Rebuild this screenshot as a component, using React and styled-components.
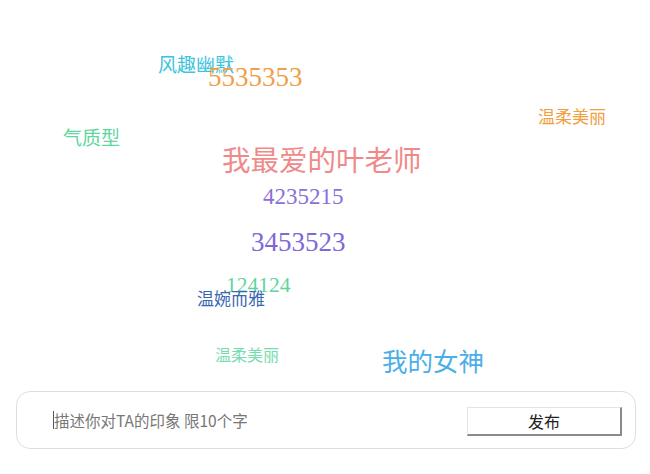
import styled, { createGlobalStyle } from "styled-components";

const GlobalStyle = createGlobalStyle`
  body {
    margin: 0;
    background: #fff;
    font-family: "Noto Sans CJK SC", "Noto Sans", sans-serif;
  }
`;

const words = [
  { text: "风趣幽默", x: 158, y: 54, size: 19, color: "#3cc4dc" },
  { text: "5535353", x: 208, y: 64, size: 27, color: "#f0a048", num: true },
  { text: "温柔美丽", x: 538, y: 107, size: 17, color: "#f0a040" },
  { text: "气质型", x: 63, y: 127, size: 19, color: "#5ed6a0" },
  { text: "我最爱的叶老师", x: 222, y: 145, size: 28.5, color: "#f08a8a" },
  { text: "4235215", x: 263, y: 185, size: 23, color: "#8a70d8", num: true },
  { text: "3453523", x: 251, y: 229, size: 27, color: "#8068d8", num: true },
  { text: "124124", x: 226, y: 275, size: 21.5, color: "#60d4a0", num: true },
  { text: "温婉而雅", x: 197, y: 289, size: 17, color: "#3a68b0" },
  { text: "温柔美丽", x: 215, y: 346, size: 16, color: "#78dcb0" },
  { text: "我的女神", x: 382, y: 347, size: 25.5, color: "#4aaee8" },
];

const Page = styled.div`
  width: 650px;
  height: 474px;
  display: flex;
  flex-direction: column;
`;

const Cloud = styled.div`
  position: relative;
  height: 391px;
  flex-shrink: 0;
`;

const Word = styled.span`
  position: absolute;
  white-space: nowrap;
  line-height: 1;
  font-size: ${(p) => p.$size}px;
  color: ${(p) => p.$color};
  font-family: ${(p) =>
    p.$num
      ? `"Liberation Serif", serif`
      : `"Noto Sans CJK SC", "Noto Sans", sans-serif`};
`;

const Composer = styled.form`
  margin: 0 14px 0 16px;
  height: 58px;
  box-sizing: border-box;
  border: 1px solid #dedede;
  border-radius: 14px;
  display: flex;
  align-items: center;
  padding: 0 13px 0 36px;
  gap: 12px;
`;

const Field = styled.input`
  flex: 1;
  border: none;
  border-left: 1px solid #555;
  outline: none;
  background: transparent;
  font-family: "Noto Sans CJK SC", "Noto Sans", sans-serif;
  font-size: 15.5px;
  color: #333;
  padding: 0;
  height: 18px;
  line-height: 18px;

  &::placeholder {
    color: #777;
  }
`;

const Submit = styled.button`
  width: 155px;
  height: 29px;
  box-sizing: border-box;
  background: #fff;
  border-top: 1px solid #e4e4e4;
  border-left: 1px solid #e4e4e4;
  border-right: 2px solid #8a8a8a;
  border-bottom: 2px solid #8a8a8a;
  font-family: "Noto Sans CJK SC", "Noto Sans", sans-serif;
  font-size: 16px;
  color: #222;
  padding: 0;
  margin-top: 3px;
`;

export default function App() {
  return (
    <Page>
      <GlobalStyle />
      <Cloud>
        {words.map((w, i) => (
          <Word
            key={i}
            $size={w.size}
            $color={w.color}
            $num={w.num}
            style={{ left: w.x, top: w.y }}
          >
            {w.text}
          </Word>
        ))}
      </Cloud>
      <Composer onSubmit={(e) => e.preventDefault()}>
        <Field placeholder="描述你对TA的印象 限10个字" />
        <Submit type="submit">发布</Submit>
      </Composer>
    </Page>
  );
}
